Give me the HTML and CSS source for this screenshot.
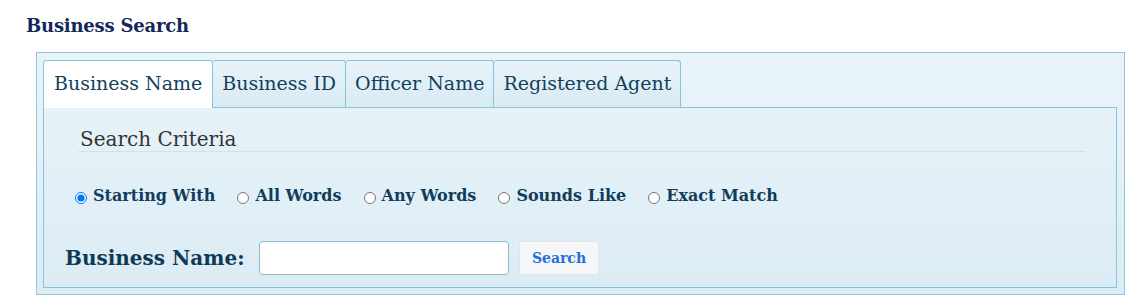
FILE: index.html
```html
<!DOCTYPE html>
<html lang="en">
<head>
    <meta charset="UTF-8">
    <meta name="viewport" content="width=device-width, initial-scale=1.0">
    <title>Business Search</title>
    <link rel="stylesheet" href="styles.css">
</head>
<body>
    <h2 class="page-title">Business Search</h2>

    <div class="search-box">
        <ul class="tabs">
            <li class="tab active">Business Name</li>
            <li class="tab">Business ID</li>
            <li class="tab">Officer Name</li>
            <li class="tab">Registered Agent</li>
        </ul>

        <div class="tab-panel">
            <h3 class="criteria-title">Search Criteria</h3>

            <div class="match-options">
                <label><input type="radio" name="match" checked> Starting With</label>
                <label><input type="radio" name="match"> All Words</label>
                <label><input type="radio" name="match"> Any Words</label>
                <label><input type="radio" name="match"> Sounds Like</label>
                <label><input type="radio" name="match"> Exact Match</label>
            </div>

            <div class="name-row">
                <label class="name-label" for="bizName">Business Name:</label>
                <input type="text" id="bizName" class="name-input">
                <button class="search-button">Search</button>
            </div>
        </div>
    </div>
</body>
</html>
```

FILE: styles.css
```css
* {
    margin: 0;
    padding: 0;
    box-sizing: border-box;
}

:root {
    --navy: #13275a;
    --teal: #0f3d5b;
    --border: #86c3dc;
}

body {
    font-family: 'DejaVu Serif', 'Liberation Serif', serif;
    background: #fff;
    color: var(--teal);
}

.page-title {
    font-size: 18px;
    font-weight: bold;
    color: var(--navy);
    padding: 15px 0 0 26px;
    height: 52px;
    letter-spacing: -0.2px;
}

.search-box {
    margin: 0 19px 0 36px;
    border: 1px solid #92c6da;
    background: linear-gradient(#e9f4f9, #dcecf4);
    padding: 7px 7px 6px 6px;
}

.tabs {
    list-style: none;
    display: flex;
    height: 47px;
}

.tab {
    font-size: 19px;
    padding: 0 9px;
    line-height: 45px;
    border: 1px solid var(--border);
    border-bottom: none;
    border-left: none;
    border-radius: 3px 3px 0 0;
    background: linear-gradient(#e8f3f9, #d9eaf3);
    color: #123f5c;
}

.tab:first-child {
    border-left: 1px solid var(--border);
}

.tab.active {
    background: #fff;
    padding: 0 10px;
    height: 48px;
    position: relative;
    z-index: 1;
}

.tab-panel {
    border: 1px solid var(--border);
    background: linear-gradient(#e6f2f8, #dcecf4);
    padding: 19px 31px 12px 21px;
    height: 181px;
}

.criteria-title {
    font-size: 20px;
    line-height: 24px;
    font-weight: normal;
    color: #333;
    margin-left: 13px;
    padding: 0 0 0 2px;
    border-bottom: 1px solid #dcdfe1;
}

.match-options {
    display: flex;
    gap: 22px;
    margin: 34px 0 0 10px;
}

.match-options label {
    display: flex;
    align-items: center;
    gap: 6px;
    font-size: 16px;
    line-height: 19px;
    font-weight: bold;
    color: var(--teal);
}

.match-options input {
    width: 12px;
    height: 12px;
    margin: 4px 0 0 0;
}

.name-row {
    display: flex;
    align-items: center;
    margin-top: 36px;
}

.name-label {
    font-size: 20px;
    font-weight: bold;
    color: #0e3a55;
    width: 194px;
}

.name-input {
    width: 250px;
    height: 34px;
    border: 1px solid #8dbcd1;
    border-radius: 4px;
    background: #fff;
}

.search-button {
    margin-left: 10px;
    width: 80px;
    height: 34px;
    border: 1px solid #e2e5e7;
    border-radius: 2px;
    background: #f5f6f7;
    color: #1f6fd8;
    font-family: inherit;
    font-weight: bold;
    font-size: 14px;
}
```
